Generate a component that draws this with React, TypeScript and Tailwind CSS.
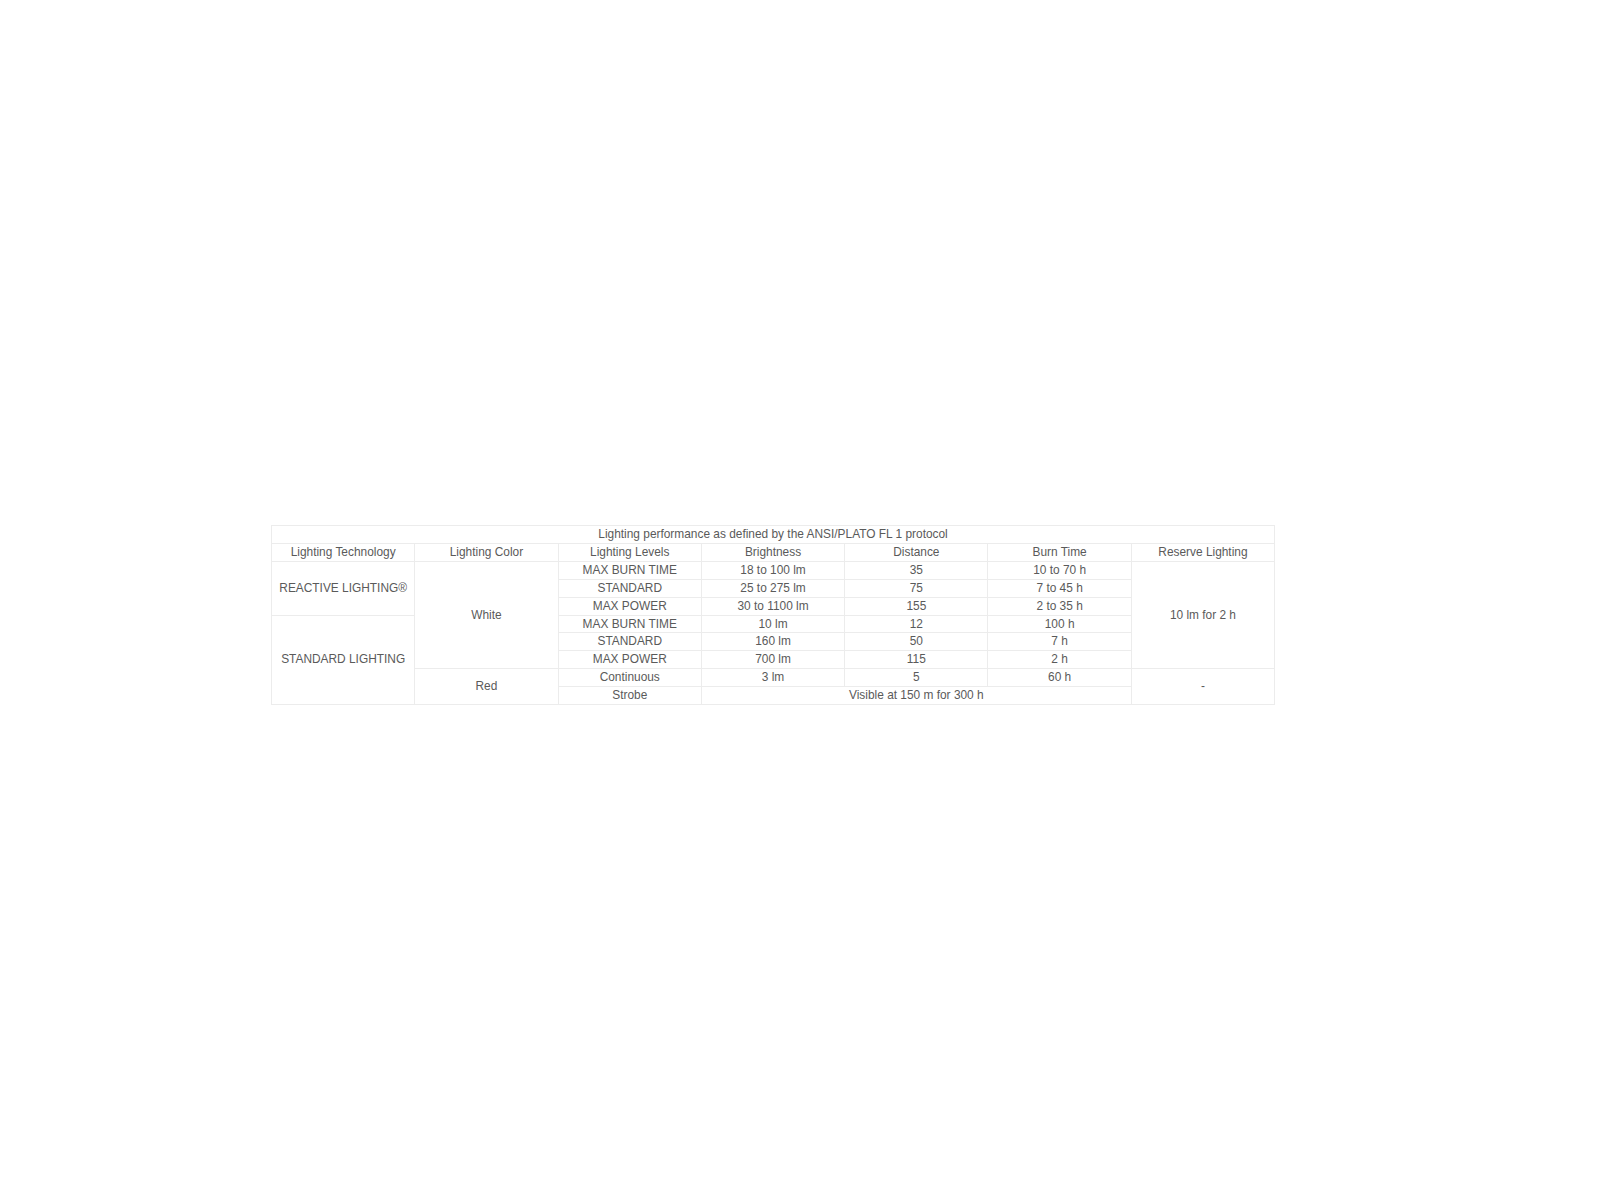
const cell = "border border-[#ececec] text-center align-middle p-0 pt-[1px] leading-none font-normal"

const levels = [
    { level: "MAX BURN TIME", brightness: "18 to 100 lm", distance: "35", burn: "10 to 70 h" },
    { level: "STANDARD", brightness: "25 to 275 lm", distance: "75", burn: "7 to 45 h" },
    { level: "MAX POWER", brightness: "30 to 1100 lm", distance: "155", burn: "2 to 35 h" },
    { level: "MAX BURN TIME", brightness: "10 lm", distance: "12", burn: "100 h" },
    { level: "STANDARD", brightness: "160 lm", distance: "50", burn: "7 h" },
    { level: "MAX POWER", brightness: "700 lm", distance: "115", burn: "2 h" },
]

export default function App() {
    return (
        <div className="min-h-[1200px] bg-white pl-[271px] pt-[525px] font-['Liberation_Sans',Arial,sans-serif] text-[11.9px] text-[#5a5a5a]">
            <table className="w-[1003px] table-fixed border-collapse">
                <colgroup>
                    {Array.from({ length: 7 }).map((_, i) => (
                        <col key={i} className="w-[143.3px]" />
                    ))}
                </colgroup>
                <tbody>
                    <tr className="h-[18px]">
                        <td colSpan={7} className={cell}>
                            Lighting performance as defined by the ANSI/PLATO FL 1 protocol
                        </td>
                    </tr>
                    <tr className="h-[18.3px]">
                        <th className={cell}>Lighting Technology</th>
                        <th className={cell}>Lighting Color</th>
                        <th className={cell}>Lighting Levels</th>
                        <th className={cell}>Brightness</th>
                        <th className={cell}>Distance</th>
                        <th className={cell}>Burn Time</th>
                        <th className={cell}>Reserve Lighting</th>
                    </tr>
                    {levels.map((row, i) => (
                        <tr key={i} className="h-[17.8px]">
                            {i === 0 && (
                                <td rowSpan={3} className={cell}>
                                    REACTIVE LIGHTING®
                                </td>
                            )}
                            {i === 3 && (
                                <td rowSpan={5} className={cell}>
                                    STANDARD LIGHTING
                                </td>
                            )}
                            {i === 0 && (
                                <td rowSpan={6} className={cell}>
                                    White
                                </td>
                            )}
                            <td className={cell}>{row.level}</td>
                            <td className={cell}>{row.brightness}</td>
                            <td className={cell}>{row.distance}</td>
                            <td className={cell}>{row.burn}</td>
                            {i === 0 && (
                                <td rowSpan={6} className={cell}>
                                    10 lm for 2 h
                                </td>
                            )}
                        </tr>
                    ))}
                    <tr className="h-[17.8px]">
                        <td rowSpan={2} className={cell}>Red</td>
                        <td className={cell}>Continuous</td>
                        <td className={cell}>3 lm</td>
                        <td className={cell}>5</td>
                        <td className={cell}>60 h</td>
                        <td rowSpan={2} className={cell}>-</td>
                    </tr>
                    <tr className="h-[17.8px]">
                        <td className={cell}>Strobe</td>
                        <td colSpan={3} className={cell}>Visible at 150 m for 300 h</td>
                    </tr>
                </tbody>
            </table>
        </div>
    )
}
